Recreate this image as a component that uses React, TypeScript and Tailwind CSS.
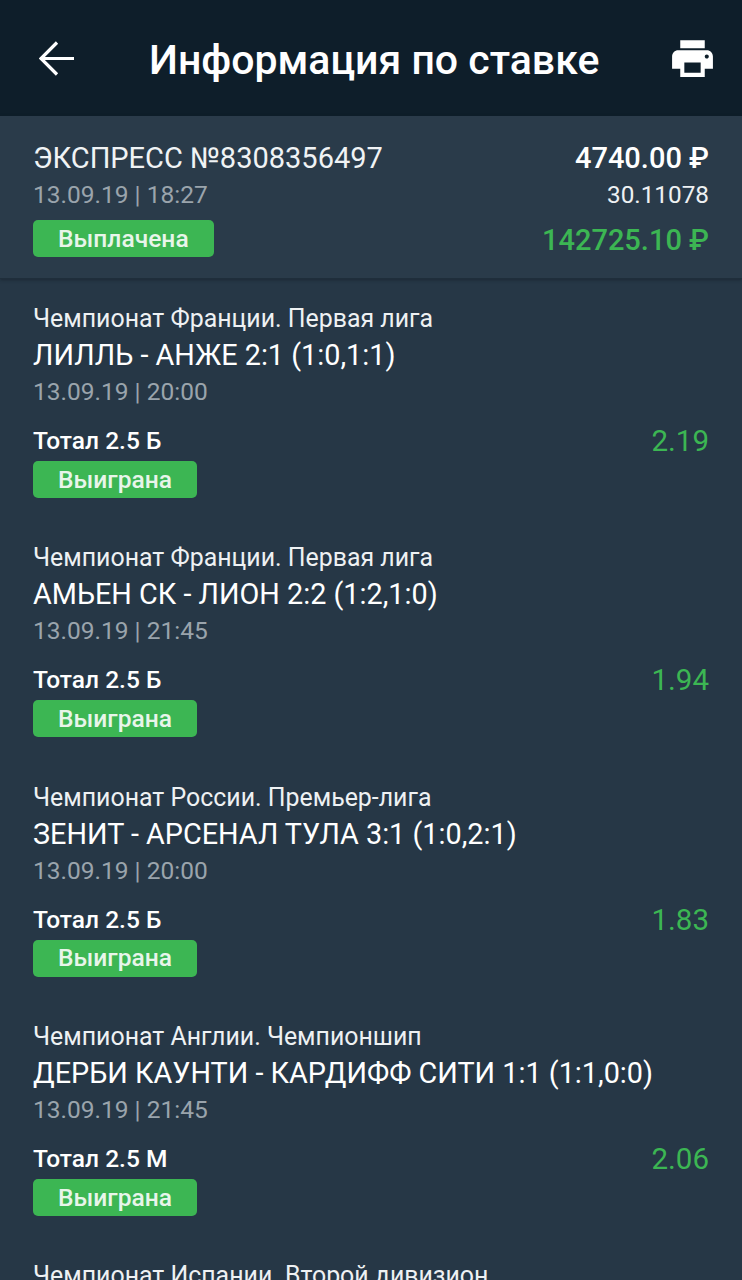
import React from "react";

const items = [
  { league: "Чемпионат Франции. Первая лига", match: "ЛИЛЛЬ - АНЖЕ 2:1 (1:0,1:1)", date: "13.09.19 | 20:00", total: "Тотал 2.5 Б", odds: "2.19" },
  { league: "Чемпионат Франции. Первая лига", match: "АМЬЕН СК - ЛИОН 2:2 (1:2,1:0)", date: "13.09.19 | 21:45", total: "Тотал 2.5 Б", odds: "1.94" },
  { league: "Чемпионат России. Премьер-лига", match: "ЗЕНИТ - АРСЕНАЛ ТУЛА 3:1 (1:0,2:1)", date: "13.09.19 | 20:00", total: "Тотал 2.5 Б", odds: "1.83" },
  { league: "Чемпионат Англии. Чемпионшип", match: "ДЕРБИ КАУНТИ - КАРДИФФ СИТИ 1:1 (1:1,0:0)", date: "13.09.19 | 21:45", total: "Тотал 2.5 М", odds: "2.06" },
];

function Badge({ children, width }: { children: React.ReactNode; width: string }) {
  return (
    <div className={`flex h-[37px] items-center rounded-[5px] bg-[#3cb653] pl-[25px] pt-[1px] text-[24.6px] font-medium text-[#e8f5ea] ${width}`}>
      {children}
    </div>
  );
}

export default function App() {
  return (
    <div className="h-[1280px] w-[742px] overflow-hidden bg-[#263746] font-['Roboto',sans-serif]">
      <header className="flex h-[116px] items-center bg-[#0e1e2a] pl-[39px] pr-[25px] text-white">
        <svg width="35" height="35" viewBox="0 0 35 35" fill="none" stroke="#ffffff" strokeWidth="3.2" className="shrink-0">
          <path d="M35 17.5H2.5M18 1.5L2 17.5l16 16" />
        </svg>
        <h1 className="ml-[75px] mt-[4px] flex-1 whitespace-nowrap text-[41px] font-medium leading-none">Информация по ставке</h1>
        <svg width="49" height="49" viewBox="0 0 24 24" fill="#ffffff" className="shrink-0">
          <path d="M19 8H5c-1.66 0-3 1.34-3 3v6h4v4h12v-4h4v-6c0-1.66-1.34-3-3-3zm-3 11H8v-5h8v5zm3-7c-.55 0-1-.45-1-1s.45-1 1-1 1 .45 1 1-.45 1-1 1zM18 3H6v4h12V3z" />
        </svg>
      </header>

      <section className="flex h-[163px] justify-between border-b border-[#1f2e3b] bg-[#2a3b4a] px-[33px] pt-[24px] shadow-[0_1px_3px_rgba(15,25,35,0.5)]">
        <div>
          <div className="text-[29px] leading-[36px] text-[#f0f3f5]">ЭКСПРЕСС №8308356497</div>
          <div className="mt-[1px] text-[24.5px] leading-[36px] text-[#9aa4ac]">13.09.19 | 18:27</div>
          <div className="mt-[7px]">
            <Badge width="w-[181px]">Выплачена</Badge>
          </div>
        </div>
        <div className="text-right">
          <div className="text-[29px] font-medium leading-[36px] text-white">4740.00 ₽</div>
          <div className="mt-[1px] text-[24.3px] leading-[36px] text-[#eef1f3]">30.11078</div>
          <div className="mt-[9px] text-[29px] font-medium leading-[36px] text-[#3cb653]">142725.10 ₽</div>
        </div>
      </section>

      <main className="pt-[21px]">
        {items.map((it, i) => (
          <article key={i} className="h-[239.33px] px-[33px]">
            <div className="text-[24.9px] leading-[37px] text-[#eef1f3]">{it.league}</div>
            <div className="text-[28.8px] leading-[37px] text-white">{it.match}</div>
            <div className="text-[24.5px] leading-[35px] text-[#9aa4ac]">{it.date}</div>
            <div className="mt-[14px] flex items-center justify-between">
              <div className="text-[24.5px] font-medium leading-[36px] text-white">{it.total}</div>
              <div className="text-[29.5px] leading-[36px] text-[#3cb653]">{it.odds}</div>
            </div>
            <div className="mt-[2px]">
              <Badge width="w-[164px]">Выиграна</Badge>
            </div>
          </article>
        ))}
        <article className="px-[33px]">
          <div className="text-[24.9px] leading-[37px] text-[#eef1f3]">Чемпионат Испании. Второй дивизион</div>
        </article>
      </main>
    </div>
  );
}
